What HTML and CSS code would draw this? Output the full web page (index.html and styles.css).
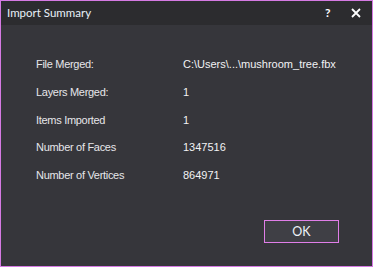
FILE: index.html
```html
<!DOCTYPE html>
<html>
<head>
<meta charset="utf-8">
<link rel="stylesheet" href="styles.css">
</head>
<body>
<div class="window">
  <div class="titlebar">
    <span class="title">Import Summary</span>
    <span class="help">?</span>
    <svg class="close" width="10" height="10" viewBox="0 0 10 10"><path d="M1 1 L9 9 M9 1 L1 9" stroke="#ffffff" stroke-width="1.8" fill="none"/></svg>
  </div>
  <div class="content">
    <div class="grid">
      <div class="label">File Merged:</div><div class="value path">C:\Users\...\mushroom_tree.fbx</div>
      <div class="label">Layers Merged:</div><div class="value">1</div>
      <div class="label">Items Imported</div><div class="value">1</div>
      <div class="label">Number of Faces</div><div class="value">1347516</div>
      <div class="label">Number of Vertices</div><div class="value">864971</div>
    </div>
    <div class="actions">
      <button class="ok">OK</button>
    </div>
  </div>
</div>
</body>
</html>
```
FILE: styles.css
```css
html, body {
  margin: 0;
  padding: 0;
  background: #36363b;
}
.window {
  width: 373px;
  height: 267px;
  box-sizing: border-box;
  border: 1px solid #d57ae3;
  background: #36363b;
  display: flex;
  flex-direction: column;
}
.titlebar {
  height: 24px;
  background: #2c2c2f;
  display: flex;
  align-items: center;
  padding: 0 0 0 6px;
  color: #e8f0f8;
  font-family: Lato, "Noto Sans", sans-serif;
  font-size: 11.5px;
}
.title {
  flex: 1;
  padding-bottom: 1px;
}
.help {
  font-weight: bold;
  font-size: 12px;
  color: #ffffff;
  width: 10px;
  margin-right: 16px;
  padding-bottom: 1px;
}
.close {
  margin-right: 11px;
}
.content {
  flex: 1;
  display: flex;
  flex-direction: column;
  padding: 33px 0 0 35px;
}
.grid {
  display: grid;
  grid-template-columns: 147px auto;
  grid-auto-rows: 27.75px;
  font-family: "Liberation Sans", Arial, sans-serif;
  font-size: 11px;
  color: #e6e6ea;
}
.label {
  letter-spacing: -0.3px;
}
.value {
  color: #f2f2f4;
  letter-spacing: 0;
}
.actions {
  display: flex;
  justify-content: flex-end;
  padding: 23px 33px 0 0;
}
.ok {
  width: 75px;
  height: 23px;
  box-sizing: border-box;
  border: 1px solid #e07ee8;
  background: #3f3f45;
  color: #eef2f8;
  font-family: Lato, "Noto Sans", sans-serif;
  font-size: 12.5px;
  padding: 0;
  margin: 0;
}
```
